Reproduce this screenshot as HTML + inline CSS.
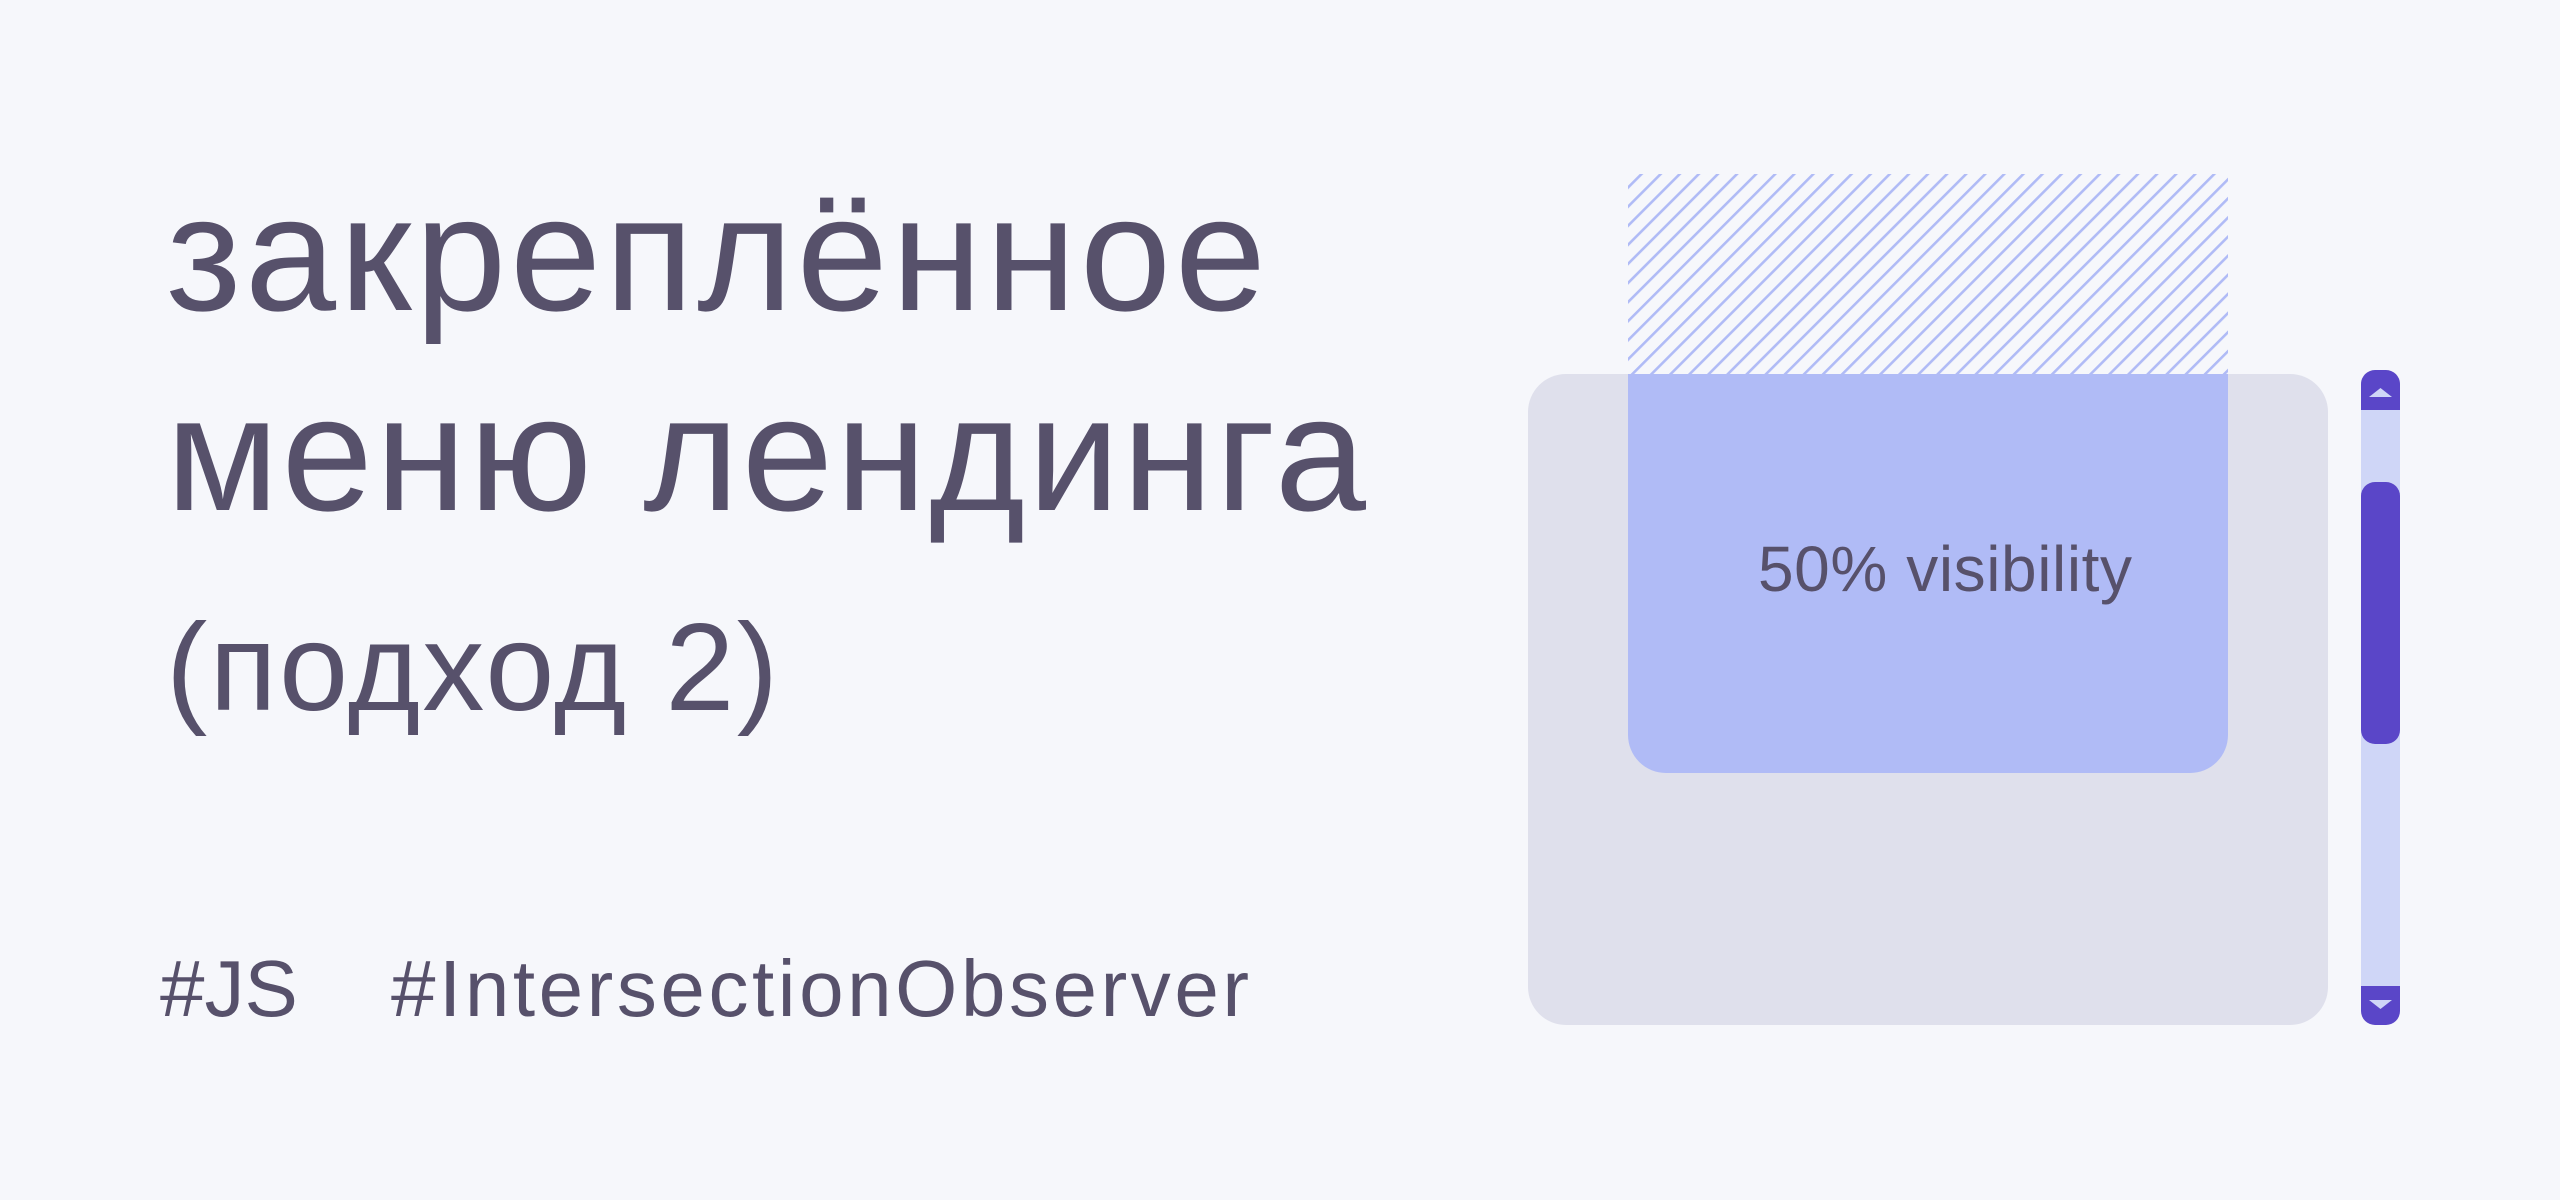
<!DOCTYPE html>
<html><head><meta charset="utf-8"><style>
html,body{margin:0;padding:0;width:2560px;height:1200px;background:#f6f7fb;overflow:hidden;position:relative;font-family:"Liberation Sans",sans-serif;color:#57516b}
</style></head><body>
<svg width="2560" height="1200" style="position:absolute;left:0;top:0">
<defs>
<pattern id="h" patternUnits="userSpaceOnUse" width="13.5" height="20" patternTransform="rotate(45)">
<rect x="0" y="0" width="2.6" height="20" fill="#b0bbf6"/>
</pattern>
</defs>
<rect x="1628" y="174" width="600" height="210" fill="url(#h)"/>
<rect x="1528" y="374" width="800" height="651" rx="38" fill="#dfe0ec"/>
<path d="M1628 374 H2228 V735 a38 38 0 0 1 -38 38 H1666 a38 38 0 0 1 -38 -38 Z" fill="#b0bbf6"/>
<text x="1945" y="591" font-size="64" text-anchor="middle" fill="#57516b" font-family="Liberation Sans, sans-serif" textLength="374">50% visibility</text>
<rect x="2361" y="370" width="39" height="655" rx="14" fill="#5a46c8"/>
<rect x="2361" y="410" width="39" height="576" fill="#cfd6f7"/>
<rect x="2361" y="482" width="39" height="262" rx="14" fill="#5a46c8"/>
<path d="M2369 397 L2380.5 388 L2392 397 Z" fill="#cfd6f7"/>
<path d="M2369 1000 L2380.5 1009 L2392 1000 Z" fill="#cfd6f7"/>
<text x="166" y="310" font-size="164" fill="#57516b" font-family="Liberation Sans, sans-serif" textLength="1100">закреплённое</text>
<text x="166" y="510" font-size="164" fill="#57516b" font-family="Liberation Sans, sans-serif" textLength="1200">меню лендинга</text>
<text x="166" y="710" font-size="124" fill="#57516b" font-family="Liberation Sans, sans-serif" textLength="612">(подход 2)</text>
<text x="160" y="1016" font-size="80" fill="#57516b" font-family="Liberation Sans, sans-serif">#JS</text>
<text x="391" y="1016" font-size="80" fill="#57516b" font-family="Liberation Sans, sans-serif" textLength="858">#IntersectionObserver</text>
</svg>
</body></html>
